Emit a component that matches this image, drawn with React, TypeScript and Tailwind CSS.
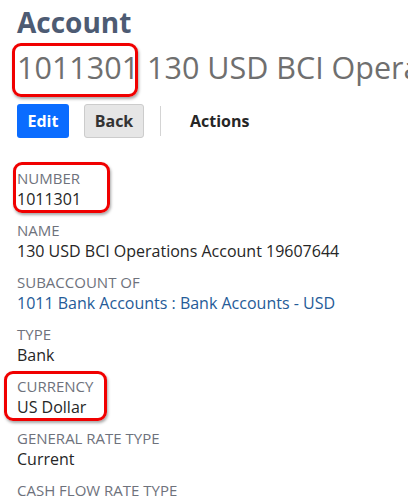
const fields = [
  { label: "NUMBER", value: "1011301" },
  { label: "NAME", value: "130 USD BCI Operations Account 19607644" },
  { label: "SUBACCOUNT OF", value: "1011 Bank Accounts : Bank Accounts - USD", link: true },
  { label: "TYPE", value: "Bank" },
  { label: "CURRENCY", value: "US Dollar" },
  { label: "GENERAL RATE TYPE", value: "Current" },
  { label: "CASH FLOW RATE TYPE", value: "Average" },
];

function Highlight({ className }: { className: string }) {
  return (
    <div
      className={`pointer-events-none absolute rounded-[9px] border-[3px] border-[#f00000] shadow-[1px_2px_3px_rgba(0,0,0,0.35)] ${className}`}
    />
  );
}

export default function App() {
  return (
    <div className="relative h-[497px] w-[408px] overflow-hidden bg-white font-['Open_Sans',sans-serif]">
      <div className="pl-[17px] pt-[4px]">
        {/* Title */}
        <h1 className="text-[28px] font-bold leading-[36px] text-[#4d5b73]">Account</h1>
        <div className="mt-[7px] whitespace-nowrap text-[30.5px] leading-[40px] text-[#6f6f6f]">
          1011301 130 USD BCI Operations Account 19607644
        </div>

        {/* Buttons */}
        <div className="mt-[17px] flex items-center">
          <button className="h-[34px] w-[52px] rounded-[3px] bg-[#0a6cff] text-[16px] font-bold text-white">
            Edit
          </button>
          <button className="ml-[15px] h-[34px] w-[60px] rounded-[3px] border border-[#cccccc] bg-[#e6e6e6] text-[16px] font-bold text-[#333333]">
            Back
          </button>
          <div className="ml-[16px] h-[30px] w-px bg-[#d4d4d4]" />
          <span className="ml-[29px] text-[16px] font-bold text-[#262626]">Actions</span>
        </div>

        {/* Fields */}
        <div className="mt-[30px] flex flex-col gap-[10px]">
          {fields.map((f) => (
            <div key={f.label}>
              <div className="text-[15px] leading-[20px] text-[#6e727c]">{f.label}</div>
              <div
                className={`text-[16px] leading-[22px] ${f.link ? "text-[#255b98]" : "text-[#262626]"}`}
              >
                {f.value}
              </div>
            </div>
          ))}
        </div>
      </div>

      <Highlight className="left-[12px] top-[43px] h-[54px] w-[126px]" />
      <Highlight className="left-[13px] top-[162px] h-[51px] w-[97px]" />
      <Highlight className="left-[4px] top-[371px] h-[50px] w-[103px]" />
    </div>
  );
}
